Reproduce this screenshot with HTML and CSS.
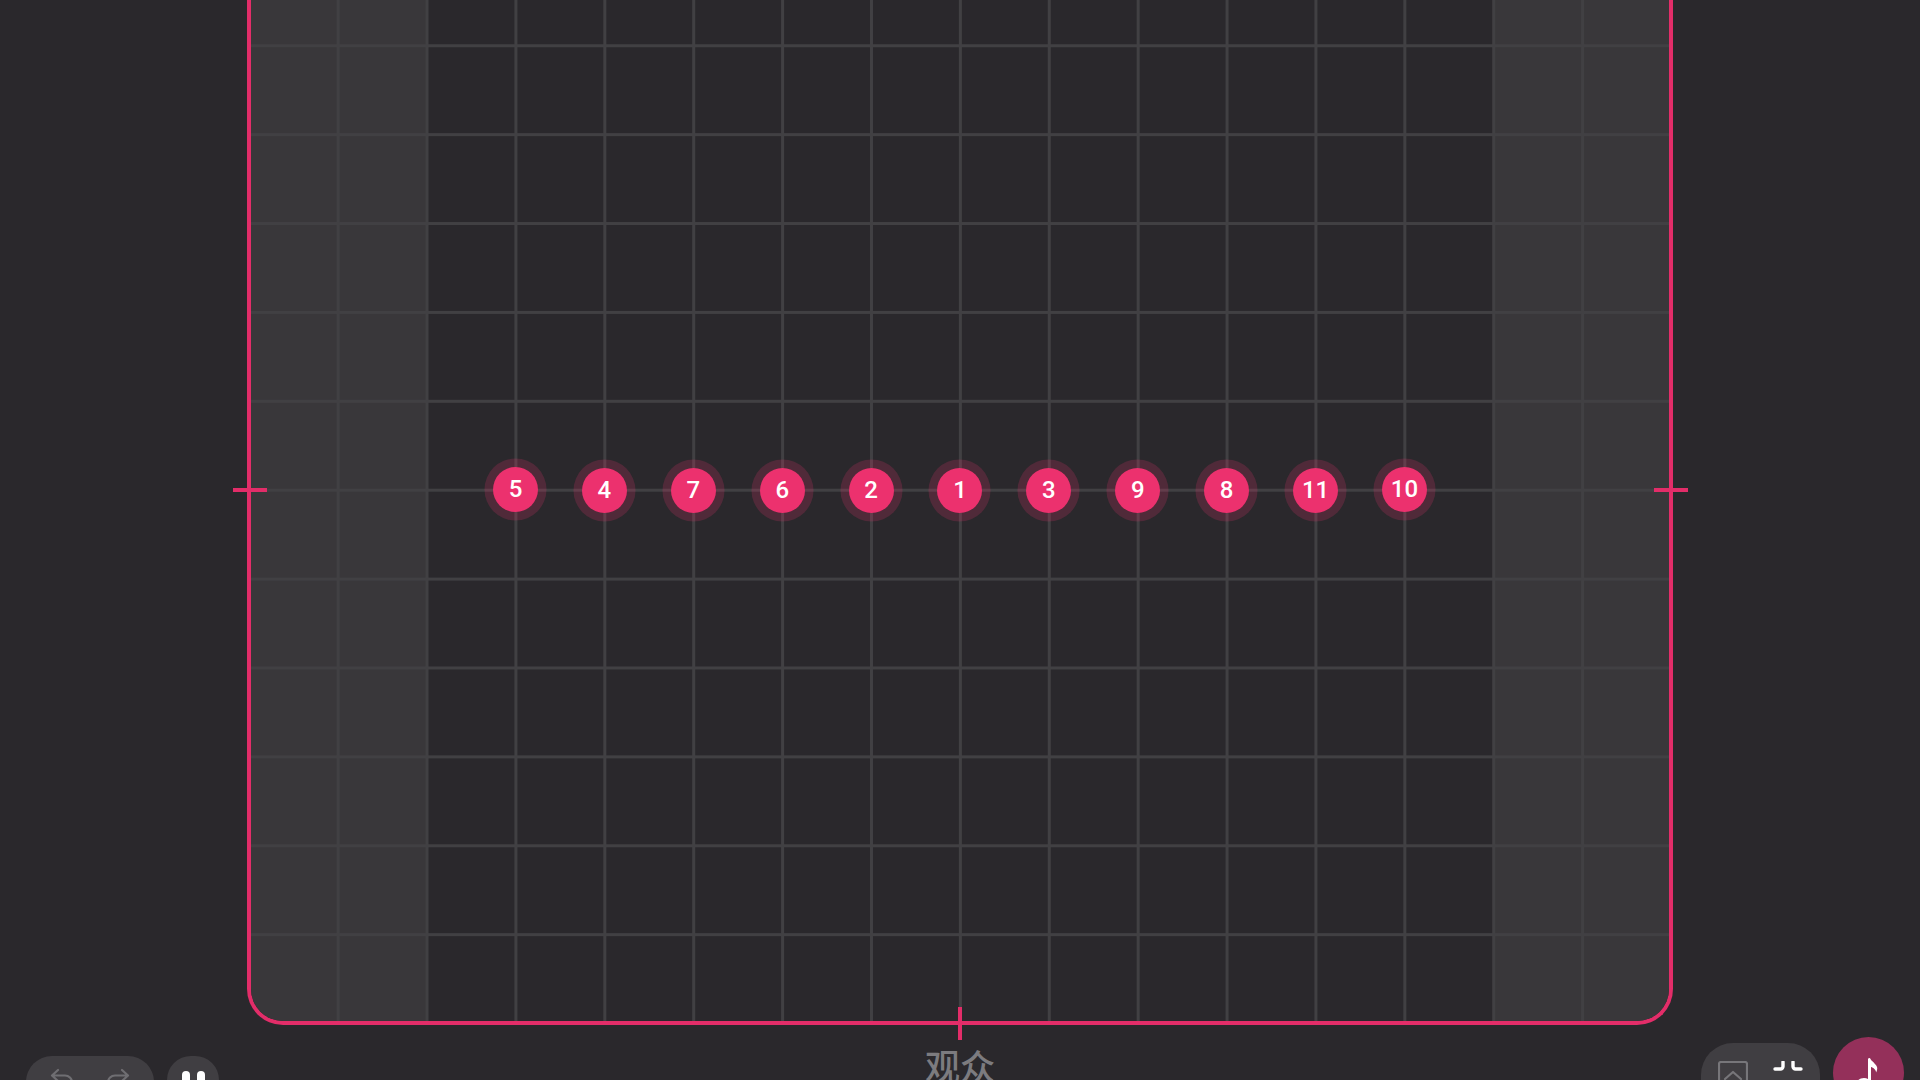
FILE: index.html
```html
<!DOCTYPE html>
<html lang="zh">
<head>
<meta charset="utf-8">
<title>舞台走位</title>
<link rel="stylesheet" href="styles.css">
</head>
<body>
<main class="page">
  <section class="stage">
    <div class="wing wing-left"></div>
    <div class="floor"></div>
    <div class="wing wing-right"></div>
    <div class="dancers">
      <div class="slot"><span class="dancer high">5</span></div>
      <div class="slot"><span class="dancer">4</span></div>
      <div class="slot"><span class="dancer">7</span></div>
      <div class="slot"><span class="dancer">6</span></div>
      <div class="slot"><span class="dancer">2</span></div>
      <div class="slot"><span class="dancer">1</span></div>
      <div class="slot"><span class="dancer">3</span></div>
      <div class="slot"><span class="dancer">9</span></div>
      <div class="slot"><span class="dancer">8</span></div>
      <div class="slot"><span class="dancer">11</span></div>
      <div class="slot"><span class="dancer high">10</span></div>
    </div>
    <i class="tick tick-left"></i>
    <i class="tick tick-right"></i>
    <i class="tick tick-bottom"></i>
  </section>
  <footer class="bar">
    <div class="bar-left">
      <div class="pill history">
        <svg class="icon-history" viewBox="0 0 24 24" fill="none" stroke="#6f6e72" stroke-width="2.2" stroke-linecap="round" stroke-linejoin="round"><path d="M8 2 2 7.5 8 13M2.500 7.500H15a7 7 0 0 1 7 7V20"/></svg>
        <svg class="icon-history" viewBox="0 0 24 24" fill="none" stroke="#6f6e72" stroke-width="2.2" stroke-linecap="round" stroke-linejoin="round"><path d="M16 2l6 5.500L16 13M21.500 7.500H9a7 7 0 0 0-7 7V20"/></svg>
      </div>
      <div class="pill pause"><span class="pause-bar"></span><span class="pause-bar"></span></div>
    </div>
    <div class="audience">观众</div>
    <div class="bar-right">
      <div class="pill tools">
        <svg class="icon-box" viewBox="0 0 30 30" fill="none" stroke="#77767a" stroke-width="2.2"><rect x="1" y="1" width="28" height="34" rx="2"/><path d="M7 18l8-7 8 7" stroke-linecap="round" stroke-linejoin="round"/></svg>
        <svg class="icon-shrink" viewBox="0 0 30 30" fill="none" stroke="#fff" stroke-width="3.4" stroke-linecap="round" stroke-linejoin="round"><path d="M10 1v4.500A2.500 2.500 0 0 1 7.500 8H2M20 1v4.500A2.500 2.500 0 0 0 22.500 8H28M2 22h5.500a2.500 2.500 0 0 1 2.500 2.500V29M28 22h-5.500a2.500 2.500 0 0 0-2.500 2.500V29"/></svg>
      </div>
      <div class="music">
        <svg class="icon-note" viewBox="0 0 24 34" fill="#fff"><path d="M11 3.500c0-1.300 1.700-2 2.400-.8 1.100 2.500 5.600 5 6.600 8.300.6 2-.2 4-1 5.500.3-2.500-2.500-4.800-5-5.500V26c0 3.300-3.200 6-7 6s-7-2-7-5 3.300-5 7-5c1.500 0 2.900.3 4 .9z"/></svg>
      </div>
    </div>
  </footer>
</main>
</body>
</html>
```

FILE: styles.css
```css
* { box-sizing: border-box; }

html, body {
  margin: 0;
  height: 100%;
  overflow: hidden;
  background: #2a282c;
}

.page {
  width: 1920px;
  height: 1080px;
  overflow: hidden;
  font-family: Roboto, "Noto Sans CJK SC", sans-serif;
}

.stage {
  position: relative;
  display: grid;
  grid-template-columns: 175.8px 1066.8px 175.8px;
  width: 1426.4px;
  height: 1025px;
  margin: 0 auto;
  border: 4px solid #e32d69;
  border-top: 0;
  border-radius: 0 0 36px 36px;
}

/* the grid lines run as one sheet over the wings and the floor */
.stage::before {
  content: "";
  position: absolute;
  inset: 0;
  z-index: 1;
  border-radius: 0 0 32px 32px;
  background-image:
    linear-gradient(90deg, #414043 2.500px, transparent 2.500px),
    linear-gradient(180deg, #414043 2.500px, transparent 2.500px);
  background-size: 88.9px 88.9px;
  background-position: 85.65px 0, 0 44.25px;
}

.wing { background: #39373a; }
.wing-left { border-radius: 0 0 0 32px; }
.wing-right { border-radius: 0 0 32px 0; }
.floor { background: #2a282c; }

.dancers {
  position: absolute;
  z-index: 2;
  top: 490px;
  left: 0;
  right: 0;
  display: flex;
  justify-content: center;
  align-items: center;
  height: 0;
}

.slot {
  display: flex;
  justify-content: center;
  flex: none;
  width: 88.9px;
}

.dancer {
  display: flex;
  align-items: center;
  justify-content: center;
  flex: none;
  width: 45px;
  height: 45px;
  border-radius: 50%;
  background: #ec316e;
  box-shadow: 0 0 0 8.500px rgba(236, 49, 110, .2);
  color: #fff;
  font-size: 24px;
  font-weight: 500;
  line-height: 1;
}

.dancer.high { margin-top: -2px; }

.tick {
  position: absolute;
  z-index: 2;
  display: block;
  background: #e32d69;
}
.tick-left { left: -18px; top: 488px; width: 34px; height: 4px; }
.tick-right { right: -19px; top: 488px; width: 34px; height: 4px; }
.tick-bottom { left: 50%; bottom: -19px; width: 4px; height: 33px; margin-left: -2px; }

.bar {
  display: grid;
  grid-template-columns: 1fr auto 1fr;
  align-items: start;
  padding: 0 16px;
}

.bar-left {
  display: flex;
  gap: 13px;
  margin-top: 31px;
  padding-left: 10px;
}

.pill { background: #403e42; }

.history {
  display: flex;
  justify-content: space-between;
  width: 128px;
  height: 64px;
  padding: 12px 24px 0;
  border-radius: 26px;
}

.icon-history { width: 24px; height: 24px; }

.pause {
  display: flex;
  justify-content: center;
  gap: 7px;
  width: 52px;
  height: 64px;
  padding-top: 15px;
  border-radius: 24px;
}

.pause-bar {
  width: 8px;
  height: 30px;
  border-radius: 4px;
  background: #fff;
}

.audience {
  margin-top: 16px;
  color: #7c7b7f;
  font-family: "Noto Sans CJK SC", sans-serif;
  font-size: 35px;
  font-weight: 500;
  line-height: 48px;
}

.bar-right {
  display: flex;
  justify-content: flex-end;
  align-items: flex-start;
  gap: 13px;
  margin-top: 12px;
}

.tools {
  display: flex;
  gap: 25px;
  width: 119px;
  height: 72px;
  margin-top: 6px;
  padding: 18px 17px 0;
  border-radius: 32px;
}

.icon-box { width: 30px; height: 30px; flex: none; }
.icon-shrink { width: 30px; height: 30px; flex: none; }

.music {
  display: flex;
  justify-content: center;
  width: 71px;
  height: 71px;
  padding-top: 19px;
  border-radius: 50%;
  background: #94305a;
}

.icon-note { width: 24px; height: 34px; flex: none; }
```
